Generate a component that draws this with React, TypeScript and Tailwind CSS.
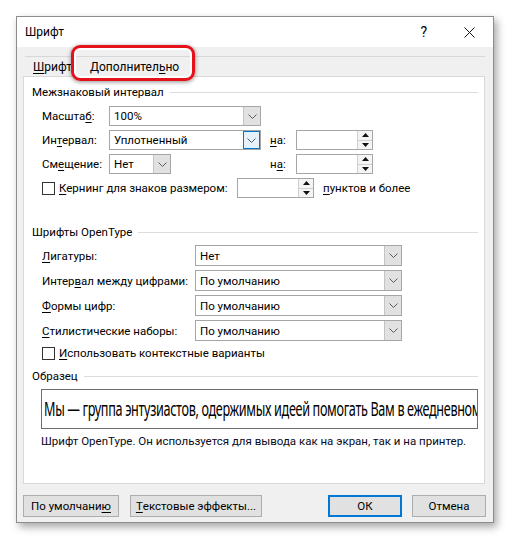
import type { ReactNode } from 'react';

const font = "font-['Roboto','Noto_Sans',sans-serif]";

function U({ children }: { children: ReactNode }) {
  return <span className="underline decoration-1 underline-offset-[2px]">{children}</span>;
}

function Chevron() {
  return (
    <svg width="9" height="5" viewBox="0 0 9 5" aria-hidden>
      <path d="M0.5 0.5 L4.5 4.5 L8.5 0.5" fill="none" stroke="#5a5a5a" strokeWidth="1" />
    </svg>
  );
}

function Combo({ w, h = 'h-[20px]', value, focused = false }: { w: string; h?: string; value: string; focused?: boolean }) {
  return (
    <div className={`${w} ${h} flex border border-[#a6a6a6] bg-white`}>
      <div className="flex-1 pl-[4px] flex items-center truncate">{value}</div>
      <div
        className={`w-[17px] flex items-center justify-center ${
          focused ? 'bg-[#e5f1fb] border border-[#0078d7]' : 'bg-[#e1e1e1] border-l border-[#c4c4c4]'
        }`}
      >
        <Chevron />
      </div>
    </div>
  );
}

function Spin({ w }: { w: string }) {
  return (
    <div className={`${w} h-[20px] flex border border-[#a6a6a6] bg-white`}>
      <div className="flex-1" />
      <div className="w-[15px] flex flex-col border-l border-[#d0d0d0] bg-[#f4f4f4]">
        <div className="flex-1 flex items-center justify-center border-b border-[#d0d0d0]">
          <svg width="7" height="4" viewBox="0 0 7 4" aria-hidden>
            <path d="M0 4 L3.5 0 L7 4 Z" fill="#111" />
          </svg>
        </div>
        <div className="flex-1 flex items-center justify-center">
          <svg width="7" height="4" viewBox="0 0 7 4" aria-hidden>
            <path d="M0 0 L3.5 4 L7 0 Z" fill="#111" />
          </svg>
        </div>
      </div>
    </div>
  );
}

function Check() {
  return <div className="w-[13px] h-[13px] shrink-0 border border-[#333] bg-white" />;
}

function Section({ title }: { title: string }) {
  return (
    <div className="h-[16px] flex items-center pl-[8px] pr-[6px]">
      <span className="leading-[16px] whitespace-nowrap">{title}</span>
      <div className="flex-1 h-px bg-[#dcdcdc] ml-[6px]" />
    </div>
  );
}

function Button({ w, children, def = false }: { w: string; children: ReactNode; def?: boolean }) {
  return (
    <div
      className={`${w} h-[22px] flex items-center justify-center whitespace-nowrap bg-[#e1e1e1] ${
        def ? 'border-2 border-[#0078d7]' : 'border border-[#adadad]'
      }`}
    >
      {children}
    </div>
  );
}

const otRows: { label: ReactNode; value: string }[] = [
  { label: <><U>Л</U>игатуры:</>, value: 'Нет' },
  { label: <>Интер<U>в</U>ал между цифрами:</>, value: 'По умолчанию' },
  { label: <><U>Ф</U>ормы цифр:</>, value: 'По умолчанию' },
  { label: <><U>С</U>тилистические наборы:</>, value: 'По умолчанию' },
];

export default function App() {
  return (
    <div className={`w-[510px] h-[542px] bg-white pt-[16px] pl-[16px] text-[11.5px] leading-[16px] text-black ${font}`}>
      <div className="relative w-[478px] h-[507px] flex flex-col border border-[#8c8c8c] bg-[#f0f0f0] shadow-[3px_4px_8px_rgba(0,0,0,0.35)]">
        {/* title bar */}
        <div className="h-[30px] bg-white flex items-center pl-[8px] pr-[18px] text-[12px]">
          <span className="flex-1">Шрифт</span>
          <span className="text-[14px] mr-[37px]">?</span>
          <svg width="11" height="11" viewBox="0 0 11 11" aria-hidden>
            <path d="M0.5 0.5 L10.5 10.5 M10.5 0.5 L0.5 10.5" stroke="#111" strokeWidth="1" />
          </svg>
        </div>

        {/* tabs */}
        <div className="relative h-[29px] pt-[9px] px-[8px] text-[12px]">
          <div className="h-full border-t border-[#d8d8d8] flex items-start pt-[2px] whitespace-nowrap">
            <span className="pl-[8px]">
              <U>Ш</U>рифт
            </span>
            <span className="ml-[18px]">
              Дополнител<U>ь</U>но
            </span>
          </div>
          <div className="absolute left-[54px] top-[-2px] w-[124px] h-[36px] z-10 rounded-[9px] border-[3px] border-[#e4121b] shadow-[0_1px_4px_rgba(0,0,0,0.45),inset_0_0_0_2px_rgba(255,255,255,0.9)]" />
        </div>

        {/* panel */}
        <div className="ml-[6px] w-[462px] h-[408px] bg-white border border-[#d9d9d9] flex flex-col pt-[7px] whitespace-nowrap">
          <Section title="Межзнаковый интервал" />
          <div className="pl-[18px] mt-[6px] flex flex-col gap-[4px]">
            <div className="h-[20px] flex items-center">
              <span className="w-[67px] shrink-0">
                Масшта<U>б</U>:
              </span>
              <Combo w="w-[152px]" value="100%" />
            </div>
            <div className="h-[20px] flex items-center">
              <span className="w-[67px] shrink-0">
                Ин<U>т</U>ервал:
              </span>
              <Combo w="w-[152px]" value="Уплотненный" focused />
              <span className="ml-[9px] w-[26px]">
                <U>н</U>а:
              </span>
              <Spin w="w-[77px]" />
            </div>
            <div className="h-[20px] flex items-center">
              <span className="w-[67px] shrink-0">
                См<U>е</U>щение:
              </span>
              <Combo w="w-[62px]" value="Нет" />
              <span className="ml-[99px] w-[26px]">
                н<U>а</U>:
              </span>
              <Spin w="w-[77px]" />
            </div>
            <div className="h-[20px] flex items-center">
              <Check />
              <span className="ml-[4px] w-[178px] shrink-0">
                <U>К</U>ернинг для знаков размером:
              </span>
              <Spin w="w-[77px]" />
              <span className="ml-[9px]">
                <U>п</U>унктов и более
              </span>
            </div>
          </div>

          <div className="mt-[26px]">
            <Section title="Шрифты OpenType" />
          </div>
          <div className="pl-[18px] mt-[5px] flex flex-col gap-[4px]">
            {otRows.map((r, i) => (
              <div key={i} className="h-[21px] flex items-center">
                <span className="w-[153px] shrink-0">{r.label}</span>
                <Combo w="w-[207px]" h="h-[21px]" value={r.value} />
              </div>
            ))}
            <div className="h-[16px] flex items-center">
              <Check />
              <span className="ml-[4px]">
                <U>И</U>спользовать контекстные варианты
              </span>
            </div>
          </div>

          <div className="mt-[7px]">
            <Section title="Образец" />
          </div>
          <div className="ml-[17px] mt-[5px] w-[437px] h-[40px] border border-[#6e6e6e] overflow-hidden flex items-center pl-[2px]">
            <span className="inline-block origin-left scale-x-[0.665] whitespace-nowrap font-['Noto_Sans',sans-serif] text-[19px] leading-[22px] tracking-[-0.5px]">
              Мы — группа энтузиастов, одержимых идеей помогать Вам в ежедневном использовании техники
            </span>
          </div>
          <div className="ml-[17px] mt-[4px] text-[#0a0a20]">
            Шрифт OpenType. Он используется для вывода как на экран, так и на принтер.
          </div>
        </div>

        {/* buttons */}
        <div className="mt-[11px] ml-[6px] flex items-center">
          <Button w="w-[96px]">
            По умолчани<U>ю</U>
          </Button>
          <Button w="w-[132px] ml-[11px]">
            <U>Т</U>екстовые эффекты...
          </Button>
          <Button w="w-[74px] ml-[66px]" def>
            ОК
          </Button>
          <Button w="w-[74px] ml-[10px]">Отмена</Button>
        </div>
      </div>
    </div>
  );
}
